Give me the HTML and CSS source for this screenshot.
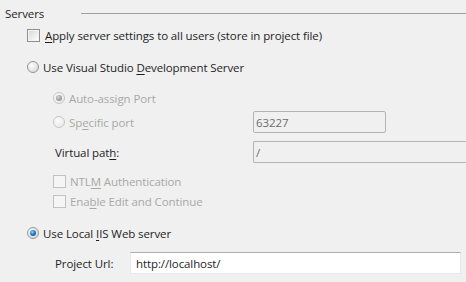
FILE: index.html
```html
<!DOCTYPE html>
<html lang="en">
<head>
  <meta charset="UTF-8" />
  <title>Servers</title>
  <link rel="stylesheet" href="styles.css">
</head>
<body>

  <div class="group">
    <div class="header">
      <span class="title">Servers</span>
      <span class="rule"></span>
    </div>

    <label class="row apply">
      <span class="check"></span>
      <span class="text"><u>A</u>pply server settings to all users (store in project file)</span>
    </label>

    <label class="row vs">
      <span class="radio"></span>
      <span class="text">Use Visual Studio <u>D</u>evelopment Server</span>
    </label>

    <label class="row sub auto off">
      <span class="radio on"></span>
      <span class="text">Auto-assi<u>g</u>n Port</span>
    </label>

    <div class="row sub specific off">
      <span class="radio"></span>
      <span class="text">Sp<u>e</u>cific port</span>
      <span class="box port">63227</span>
    </div>

    <div class="row sub virtual">
      <span class="label">Virtual pat<u>h</u>:</span>
      <span class="box path">/</span>
    </div>

    <label class="row small sub off ntlm">
      <span class="check"></span>
      <span class="text">NTL<u>M</u> Authentication</span>
    </label>

    <label class="row small sub off">
      <span class="check"></span>
      <span class="text">Ena<u>b</u>le Edit and Continue</span>
    </label>

    <label class="row iis">
      <span class="radio on blue"></span>
      <span class="text">Use Local <u>I</u>IS Web server</span>
    </label>

    <div class="row sub project">
      <span class="label url">Project Url:</span>
      <span class="box live">http://localhost/</span>
    </div>
  </div>

</body>
</html>
```

FILE: styles.css
```css
* { box-sizing: border-box; }
body {
  margin: 0;
  background-color: #f0f0f0;
  font-family: 'Open Sans', 'Noto Sans', sans-serif;
  font-size: 11.5px;
  letter-spacing: -0.1px;
  color: #1e1e1e;
  overflow: hidden;
}
u { text-decoration-thickness: 1px; text-underline-offset: 2px; }

.group { width: 466px; }

.header { display: flex; align-items: center; height: 22px; margin-top: 2px; }
.title { width: 81px; padding-left: 5px; }
.rule { flex: 1; height: 1px; background-color: #a0a0a0; margin-top: 1px; }

.row { display: flex; align-items: center; height: 22px; padding-left: 27px; }
.row.sub { padding-left: 53px; }
.row.small { height: 20px; }
.text { margin-left: 4px; white-space: nowrap; }
.off .text { color: #a8a8a8; }

.apply .text { margin-left: 5px; }
.vs { margin-top: 10px; }
.auto { margin-top: 9px; }
.specific { margin-top: 2px; }
.specific .text { width: 184px; }
.virtual { margin-top: 8px; }
.ntlm { margin-top: 8px; }
.iis { margin-top: 11px; }
.project { margin-top: 8px; }

.check {
  width: 13px; height: 13px;
  border: 1px solid #8e8f8f;
  background: linear-gradient(135deg, #d5d5d5 0%, #f4f4f4 70%, #fdfdfd 100%);
  box-shadow: inset 0 0 0 1px #f4f4f4;
  flex: none;
}
.off .check {
  border-color: #c2c2c2;
  background: #f5f5f5;
  box-shadow: none;
}

.radio {
  width: 12px; height: 12px;
  border-radius: 50%;
  border: 1px solid #959595;
  background: radial-gradient(circle at 35% 35%, #fdfdfd 0%, #e6e6e6 55%, #cfcfcf 100%);
  flex: none;
  position: relative;
}
.off .radio {
  border-color: #c6c6c6;
  background: radial-gradient(circle at 35% 35%, #fbfbfb 0%, #ececec 70%, #e2e2e2 100%);
}
.radio.on::after {
  content: "";
  position: absolute;
  left: 2px; top: 2px;
  width: 6px; height: 6px;
  border-radius: 50%;
  background: radial-gradient(circle at 40% 35%, #d8d8d8 0%, #9a9a9a 60%, #7c7c7c 100%);
}
.radio.blue::after {
  background: radial-gradient(circle at 40% 35%, #8fd0ff 0%, #1f7fd0 45%, #0d3d72 100%);
}

.label { margin-left: 2px; white-space: nowrap; }
.virtual .label { width: 198px; }
.url { width: 75px; }

.box {
  height: 22px;
  border: 1px solid #b4b4b4;
  border-radius: 2px;
  padding: 1px 4px 0 2px;
  display: flex;
  align-items: center;
  color: #6d6d6d;
  background-color: #f0f0f0;
}
.port { width: 133px; }
.path { flex: 1; border-right: none; border-radius: 2px 0 0 2px; }
.live {
  width: 331px;
  background-color: #fff;
  color: #1e1e1e;
  border-color: #e3e9ef;
  border-top-color: #abadb3;
  border-radius: 0;
  padding-left: 5px;
}
```
